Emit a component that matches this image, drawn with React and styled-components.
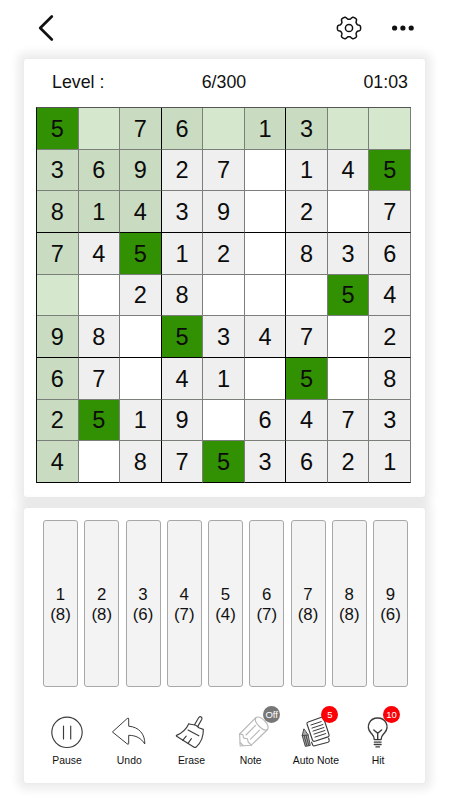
import React, { useState } from 'react';
import styled, { createGlobalStyle, css } from 'styled-components';

const GlobalStyle = createGlobalStyle`
  * {
    box-sizing: border-box;
  }

  body {
    background-color: #fff;
    color: #111;
    font-family: 'Liberation Sans', Arial, sans-serif;
    margin: 0;
  }

  button {
    background: none;
    border: 0;
    color: inherit;
    cursor: pointer;
    font-family: inherit;
    padding: 0;
  }
`;

const Screen = styled.main`
  display: flex;
  flex-direction: column;
  height: 800px;
  overflow: hidden;
  width: 450px;
`;

const Header = styled.header`
  align-items: center;
  display: flex;
  height: 59px;
  padding: 0 32px 3px 35px;
`;

const HeaderButton = styled.button`
  height: 28px;
  margin-left: ${({ $push }) => ($push ? 'auto' : '0')};
  width: 28px;

  svg {
    display: block;
  }
`;

const Gap = styled.span`
  width: 27px;
`;

const Panels = styled.div`
  display: flex;
  flex-direction: column;
  gap: 11px;
  margin: 0 25px 0 24px;
`;

const Panel = styled.section`
  background-color: #fff;
  border-radius: 3px;
  box-shadow: 0 0 3px rgba(0, 0, 0, 0.04), 0 0 8px 7px rgba(0, 0, 0, 0.07);
  height: ${({ $height }) => $height}px;
`;

const BoardPanel = styled(Panel)`
  padding: 13px 13px 0 12px;
`;

const ControlPanel = styled(Panel)`
  padding: 12px 17px 0 12px;
`;

const Status = styled.div`
  display: grid;
  font-size: 17.8px;
  grid-template-columns: 1fr 1fr 1fr;
  height: 35px;
  line-height: 20px;
  padding: 0 4px 0 16px;

  span:nth-child(2) {
    text-align: center;
    transform: translateX(-6px);
  }

  span:last-child {
    text-align: right;
  }
`;

const Board = styled.div`
  border-left: 1px solid #111;
  border-top: 1px solid #555;
  display: grid;
  grid-template-columns: repeat(9, 1fr);
  grid-template-rows: repeat(9, 1fr);
  height: 376px;
  width: 375px;
`;

const backgrounds = {
  selected: '#329003',
  lit: '#c9dcc1',
  litEmpty: '#d5e8cd',
  given: '#efefef',
  empty: '#fff'
};

const Cell = styled.div`
  align-items: center;
  background-color: ${({ $kind }) => backgrounds[$kind]};
  border-bottom: 1px solid #7b7f79;
  border-right: 1px solid #7b7f79;
  color: #0b0b0b;
  display: flex;
  font-size: 23.5px;
  justify-content: center;
  line-height: 1;
  min-width: 0;
  padding-top: 2px;

  ${({ $thickRight }) => $thickRight && css`
    border-right-color: #000;
  `}

  ${({ $thickBottom }) => $thickBottom && css`
    border-bottom-color: #000;
  `}
`;

const Keys = styled.div`
  display: flex;
  justify-content: space-between;
  padding-left: 7px;
`;

const Key = styled.button`
  background-color: #f3f3f3;
  border: 1px solid #a8a8a8;
  border-radius: 3px;
  color: #111;
  font-size: 16.8px;
  height: 167px;
  line-height: 20px;
  padding-top: 2px;
  width: 35px;

  span {
    display: block;
    margin: 0 -4px;
  }
`;

const Toolbar = styled.div`
  display: grid;
  grid-template-columns: repeat(6, 62.2px);
  margin-top: 17px;
`;

const Tool = styled.button`
  align-items: center;
  display: flex;
  flex-direction: column;
  font-size: 10.4px;
  line-height: 12px;
  position: relative;

  svg {
    display: block;
    fill: none;
    stroke: ${({ $muted }) => ($muted ? '#b8b8b8' : '#3c3c3c')};
    stroke-linecap: round;
    stroke-linejoin: round;
    stroke-width: 1.15;
  }
`;

const Label = styled.span`
  margin-top: 3px;
  transform: translateX(${({ $shift = 0 }) => $shift}px);
`;

const Badge = styled.span`
  background-color: ${({ $off }) => ($off ? '#777' : '#fb0007')};
  border-radius: 50%;
  color: #fff;
  font-size: 9.5px;
  height: 17px;
  left: ${({ $left }) => $left}px;
  line-height: 17px;
  position: absolute;
  text-align: center;
  top: 1.5px;
  width: 17px;
`;

const puzzle = [
  '5.76.13..',
  '36927.145',
  '81439.2.7',
  '74512.836',
  '..28...54',
  '98.5347.2',
  '67.41.5.8',
  '2519.6473',
  '4.8753621'
];

const keys = [8, 8, 6, 7, 4, 7, 8, 8, 6];

const getKind = (value, row, col, selected) => {
  if (value === selected) return 'selected';
  const lit = row === 0 || col === 0 || (row < 3 && col < 3);
  if (value === '.') return lit ? 'litEmpty' : 'empty';
  return lit ? 'lit' : 'given';
};

// six rounded teeth, one of them pointing right
const gearPath = () => {
  const points = [];
  for (let i = 0; i < 120; i += 1) {
    const angle = (i / 120) * Math.PI * 2;
    const radius = 10.15 + 1.5 * Math.tanh(2 * (Math.cos(6 * angle) + 0.15));
    const x = 14 + radius * Math.cos(angle);
    const y = 14 + radius * Math.sin(angle);
    points.push(`${x.toFixed(2)} ${y.toFixed(2)}`);
  }
  return `M${points.join('L')}Z`;
};

const BackIcon = () => (
  <svg width="28" height="28" viewBox="0 0 28 28" fill="none" stroke="#111" strokeWidth="2.7" strokeLinecap="round" strokeLinejoin="round">
    <path d="M16.8 2.5 5.2 14l11.6 11.5" />
  </svg>
);

const GearIcon = () => (
  <svg width="28" height="28" viewBox="0 0 28 28" fill="none" stroke="#111" strokeWidth="1.5" strokeLinejoin="round">
    <path d={gearPath()} />
    <circle cx="14" cy="14" r="3.6" />
  </svg>
);

const MoreIcon = () => (
  <svg width="28" height="28" viewBox="0 0 28 28" fill="#111">
    <circle cx="4.6" cy="14" r="2.6" />
    <circle cx="12.9" cy="14" r="2.6" />
    <circle cx="21.2" cy="14" r="2.6" />
  </svg>
);

const ToolIcon = ({ children }) => (
  <svg width="62" height="48" viewBox="0 0 62 48">{children}</svg>
);

const PauseIcon = () => (
  <ToolIcon>
    <circle cx="31" cy="28.3" r="15.2" />
    <path d="M27.5 22v13M34.7 22v13" />
  </ToolIcon>
);

const UndoIcon = () => (
  <ToolIcon>
    <path strokeWidth="1" d="M14.7 27.7 29.2 14.5Q30.7 13.5 30.7 15v7.2C41 23 47 30 46.8 40 43 34 38 31.4 30.7 31.3v8q0 1.8-1.5.6Z" />
  </ToolIcon>
);

const EraseIcon = () => (
  <ToolIcon>
    <path d="m34.5 20.8 4.3-7.3q1.1-1.3 2.4-.5 1.2.8.6 2.2l-4 7.2" />
    <path d="M28.8 19.7c2 1 3.4.6 5.6 1.1 2 .4 3.2 2.3 5 3.2l3.9 1.4c.3 6.8-2.3 13.2-7.2 17.8q-1 .5-2 0L17 32.5q-1.4-.8 0-1.4c5.5-2.3 9.3-6 11.8-11.4Z" />
    <path d="m28 26 10.8 5.8M26.2 32.2l-3.5 4.1M31.4 34.7l-3.4 4.7" />
  </ToolIcon>
);

const NoteIcon = () => (
  <ToolIcon>
    <path d="m16.6 30 16.2-16.4c2.8-1.8 5.8.1 9.1 3.5 3.2 3.6 4.5 6.4 2.2 8.9L28.3 41.2l-11.1.8Z" />
    <path d="M33.2 13.5c-2.1 2.3.2 5.9 2.7 8.5 2.9 2.9 5.9 4.9 8.1 3.7M16.6 30l3.2.6.9 3.5 3.8.7.7 3.2 3.1 3.2M17 38.5l3.2 3M23 31l9.5-9.6M27.5 35.2l9-9" />
  </ToolIcon>
);

const AutoNoteIcon = () => (
  <ToolIcon>
    <path d="M23.2 18 36.5 13.3q1.5-.4 2.2 1l5.4 16.6q.3 1.4-1.1 2l-13.2 4.4q-1.7.5-2.3-1L22 20q-.4-1.5 1.2-2Z" />
    <path d="m26.6 38.2 1.2 3q.6.9 2 .5l13.3-3.4q1.3-.5 1.1-2.2l-.6-1.8" />
    <path strokeWidth="1" d="m26 21 10.2-3.4M27 24.1l10.9-3.6M28 27.1l10.9-3.6M29 30.1l10.9-3.6M30 33.1l10.7-3.5" />
    <path fill="#aaa" strokeWidth="0.9" d="m18.8 25.2-1.6 6.4 3.1 10.8 5-1-2.2-10.4Z" />
    <path strokeWidth="0.9" d="m17.2 31.6 5.9-.6M19.2 32l2.6 9.5M21.1 31.7l2.5 9.3" />
  </ToolIcon>
);

const HitIcon = () => (
  <ToolIcon>
    <path strokeWidth="1.4" d="M27.3 35.6c.1-3.6-1.4-4.5-3.5-6.8C18.4 22.4 22.8 14 30.7 14s12.3 8.4 6.9 14.8c-2.1 2.3-3.6 3.2-3.5 6.8Z" />
    <path strokeWidth="1.4" d="M30.7 35v-6M26.8 26l3.9 3.2 3.9-3.2M27.3 38.1h6.8M27.3 40.5h6.8M29 42.9h3.4" />
  </ToolIcon>
);

const tools = [
  { label: 'Pause', Icon: PauseIcon },
  { label: 'Undo', Icon: UndoIcon },
  { label: 'Erase', Icon: EraseIcon },
  { label: 'Note', Icon: NoteIcon, badge: 'Off', left: 40.6, muted: true, shift: -3 },
  { label: 'Auto Note', Icon: AutoNoteIcon, badge: '5', left: 36.7 },
  { label: 'Hit', Icon: HitIcon, badge: '10', left: 36.2 }
];

const App = () => {
  const [selected, setSelected] = useState('5');

  return (
    <>
      <GlobalStyle />
      <Screen>
        <Header>
          <HeaderButton type="button"><BackIcon /></HeaderButton>
          <HeaderButton type="button" $push><GearIcon /></HeaderButton>
          <Gap />
          <HeaderButton type="button"><MoreIcon /></HeaderButton>
        </Header>
        <Panels>
          <BoardPanel $height={438}>
            <Status>
              <span>Level :</span>
              <span>6/300</span>
              <span>01:03</span>
            </Status>
            <Board>
              {puzzle.map((line, row) => line.split('').map((value, col) => (
                <Cell
                  key={`${row}-${col}`}
                  $kind={getKind(value, row, col, selected)}
                  $thickRight={col === 2 || col === 5}
                  $thickBottom={row % 3 === 2}
                >
                  {value === '.' ? '' : value}
                </Cell>
              )))}
            </Board>
          </BoardPanel>
          <ControlPanel $height={275}>
            <Keys>
              {keys.map((left, index) => (
                <Key key={index} type="button" onClick={() => setSelected(String(index + 1))}>
                  <span>{index + 1}</span>
                  <span>({left})</span>
                </Key>
              ))}
            </Keys>
            <Toolbar>
              {tools.map(({ label, Icon, badge, left, muted, shift }) => (
                <Tool key={label} type="button" $muted={muted}>
                  <Icon />
                  {badge && <Badge $off={muted} $left={left}>{badge}</Badge>}
                  <Label $shift={shift}>{label}</Label>
                </Tool>
              ))}
            </Toolbar>
          </ControlPanel>
        </Panels>
      </Screen>
    </>
  );
};

export default App;
